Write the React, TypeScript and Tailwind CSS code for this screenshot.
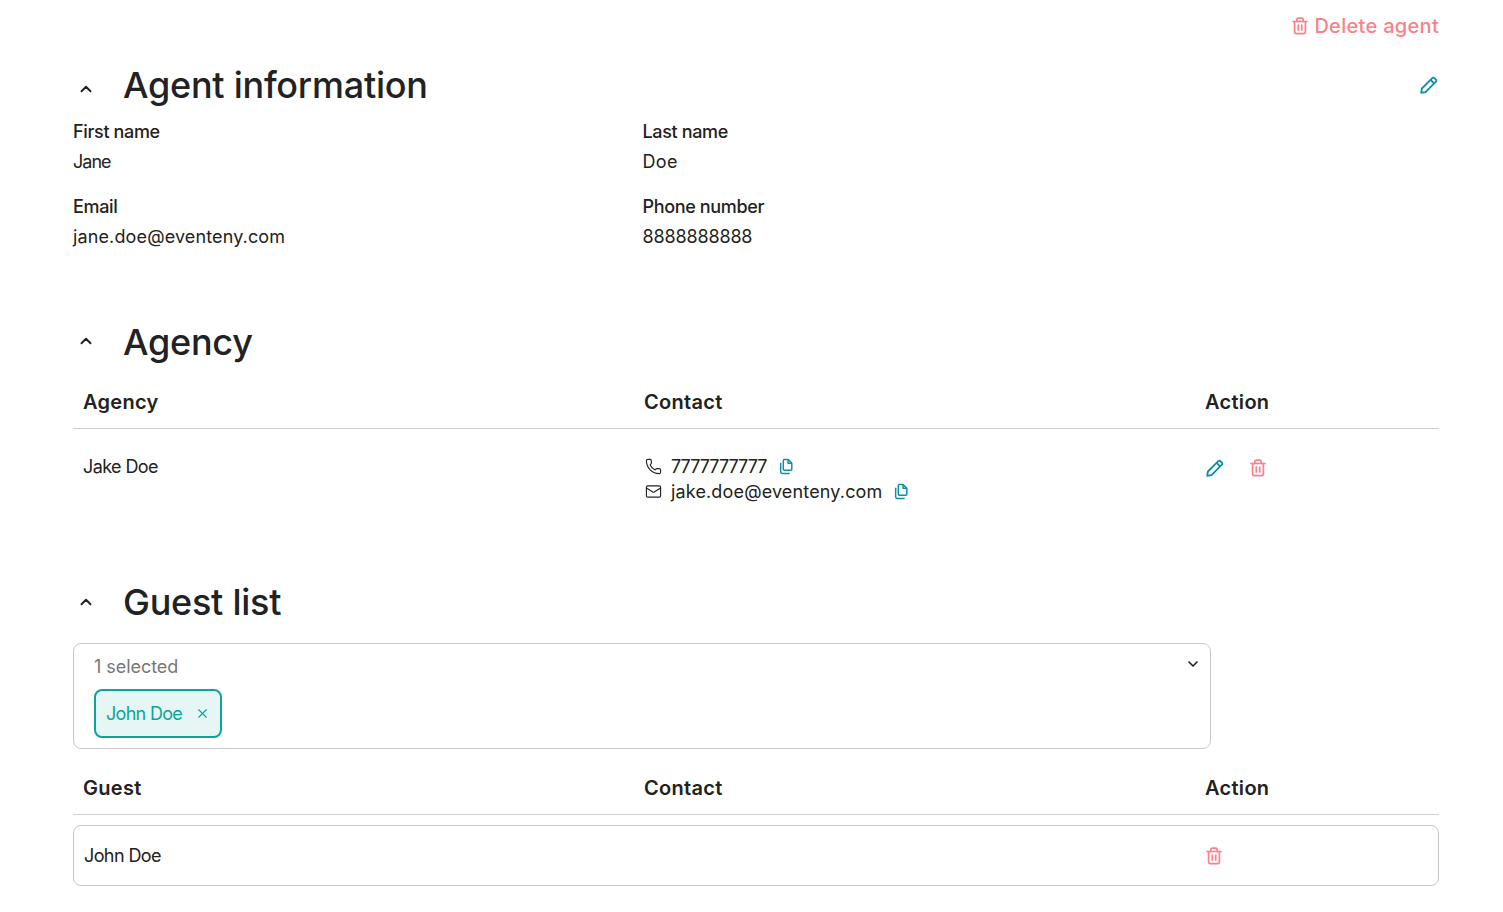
import React from 'react';
import { ChevronUp, ChevronDown, Phone, Mail, X } from 'lucide-react';

const TrashIcon = ({ className }: { className?: string }) => (
  <svg viewBox="0 0 16 18" fill="none" stroke="currentColor" strokeWidth="1.7" strokeLinecap="round" strokeLinejoin="round" className={`w-[16px] h-[18px] ${className ?? ''}`}>
    <path d="M1 4.5h14" />
    <path d="M4.8 4.5V3c0-1 .7-1.8 1.7-1.8h3c1 0 1.7.8 1.7 1.8v1.5" />
    <path d="M2.6 4.5v10.2c0 1.1.8 1.9 1.9 1.9h7c1.1 0 1.9-.8 1.9-1.9V4.5" />
    <path d="M6.3 8v5M9.7 8v5" />
  </svg>
);

const PencilIcon = ({ className }: { className?: string }) => (
  <svg viewBox="0 0 18 18" fill="none" stroke="currentColor" strokeWidth="1.8" strokeLinejoin="round" className={`w-[18px] h-[18px] ${className ?? ''}`}>
    <path d="M1.2 16.8l.7-4.3L12.3 2.1c.6-.6 1.5-.6 2.1 0l1.5 1.5c.6.6.6 1.5 0 2.1L5.5 16.1z" />
    <path d="M10.6 3.8l3.6 3.6" />
  </svg>
);

const CopyIcon = ({ className }: { className?: string }) => (
  <svg viewBox="0 0 16 16" fill="none" stroke="currentColor" strokeWidth="1.4" strokeLinejoin="round" className={`w-[17px] h-[17px] ${className ?? ''}`}>
    <path d="M5 2.5c0-.6.4-1 1-1h3.5L13 5v5.5c0 .6-.4 1-1 1H6c-.6 0-1-.4-1-1z" />
    <path d="M9.5 1.5V5H13" />
    <path d="M2.5 4.5v8.5c0 .8.7 1.5 1.5 1.5h7" />
  </svg>
);

const SectionTitle = ({ title, className, chevronClass }: { title: string; className?: string; chevronClass?: string }) => (
  <div className={`flex items-center ${className ?? ''}`}>
    <span className={`w-[50px] pl-[4px] ${chevronClass ?? ''}`}>
      <ChevronUp size={18} strokeWidth={2.5} />
    </span>
    <h2 className="text-[36px] leading-[44px] font-medium tracking-[-0.25px]">{title}</h2>
  </div>
);

const Field = ({ label, value, tracking }: { label: string; value: string; tracking: string }) => (
  <div className="h-[75px]">
    <div className="text-[18px] leading-[30px] font-medium tracking-[-0.35px]">{label}</div>
    <div className={`text-[18px] leading-[30px] ${tracking}`}>{value}</div>
  </div>
);

const TableHead = ({ first }: { first: string }) => (
  <div className="grid grid-cols-[561px_561px_1fr] h-[54px] pl-[10px] pt-[13px] border-b border-[#d0d0d0] text-[20px] leading-[28px] font-semibold tracking-[0.3px]">
    <div>{first}</div>
    <div>Contact</div>
    <div>Action</div>
  </div>
);

export default function App() {
  return (
    <div className="w-[1503px] h-[912px] overflow-hidden bg-white pl-[73px] pr-[64px] text-[#222222] font-['Inter',sans-serif]">
      <div className="flex justify-end pt-[12px] h-[63px]">
        <button className="flex items-center h-[28px] text-[20px] font-medium tracking-[0.3px] text-[#fd7f8b]">
          <TrashIcon className="mr-[6px]" />
          Delete agent
        </button>
      </div>

      <div className="flex items-center justify-between">
        <SectionTitle title="Agent information" chevronClass="mt-[8px]" />
        <PencilIcon className="text-[#0e8ea3] mr-[1px]" />
      </div>

      <div className="grid grid-cols-[569.5px_1fr] mt-[10px]">
        <Field label="First name" value="Jane" tracking="tracking-[-1px]" />
        <Field label="Last name" value="Doe" tracking="tracking-[0.3px]" />
        <Field label="Email" value="jane.doe@eventeny.com" tracking="tracking-[0.13px]" />
        <Field label="Phone number" value="8888888888" tracking="tracking-[-0.15px]" />
      </div>

      <SectionTitle title="Agency" className="mt-[53px]" chevronClass="mb-[2px]" />
      <div className="mt-[11px]">
        <TableHead first="Agency" />
        <div className="grid grid-cols-[561px_561px_1fr] pl-[10px] pt-[25px] text-[18px] leading-[25px]">
          <div className="tracking-[-0.6px]">Jake Doe</div>
          <div>
            <div className="flex items-center">
              <Phone size={17} strokeWidth={1.6} className="ml-[1px] mr-[9px]" />
              <span className="tracking-[-0.95px]">7777777777</span>
              <CopyIcon className="ml-[11px] text-[#0e8ea3]" />
            </div>
            <div className="flex items-center">
              <Mail size={17} strokeWidth={1.6} className="ml-[1px] mr-[9px]" />
              <span className="tracking-[0.15px]">jake.doe@eventeny.com</span>
              <CopyIcon className="ml-[11px] text-[#0e8ea3]" />
            </div>
          </div>
          <div className="flex items-start">
            <PencilIcon className="mt-[5px] ml-[1px] text-[#0e8ea3]" />
            <TrashIcon className="ml-[26px] mt-[5px] text-[#fd7f8b]" />
          </div>
        </div>
      </div>

      <SectionTitle title="Guest list" className="mt-[76px]" />
      <div className="relative w-[1138px] h-[106px] mt-[19px] rounded-[8px] border border-[#c8c8c8] pl-[20px] pt-[9px]">
        <div className="text-[18px] leading-[27px] text-[#777777] tracking-[-0.05px]">1 selected</div>
        <div className="inline-flex items-center h-[49px] w-[128px] mt-[9px] pl-[10px] rounded-[8px] border-2 border-[#0ca49c] bg-[#e6f6f5] text-[#0ca49c] text-[18px] tracking-[-0.7px]">
          John Doe
          <X size={15} strokeWidth={1.7} className="ml-[13px]" />
        </div>
        <ChevronDown size={16} strokeWidth={2.5} className="absolute right-[9px] top-[12px]" />
      </div>

      <div className="mt-[12px]">
        <TableHead first="Guest" />
        <div className="grid grid-cols-[561px_561px_1fr] items-center h-[61px] mt-[10px] pl-[10px] rounded-[8px] border border-[#c8c8c8] text-[18px] tracking-[-0.6px]">
          <div>John Doe</div>
          <div />
          <TrashIcon className="text-[#fd7f8b]" />
        </div>
      </div>
    </div>
  );
}
